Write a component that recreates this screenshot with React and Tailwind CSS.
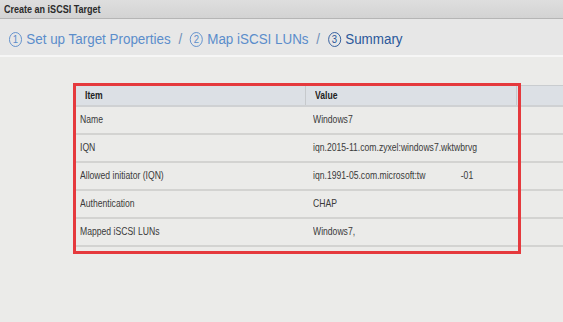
import React from "react";

const rows = [
  ["Name", "Windows7"],
  ["IQN", "iqn.2015-11.com.zyxel:windows7.wktwbrvg"],
  ["Allowed initiator (IQN)", "iqn.1991-05.com.microsoft:tw"],
  ["Authentication", "CHAP"],
  ["Mapped iSCSI LUNs", "Windows7,"],
];

function Circ({ n }) {
  return (
    <span className="inline-flex w-[15px] h-[15px] rounded-full border border-current items-center justify-center text-[11px] leading-none">
      {n}
    </span>
  );
}

function Sq({ children, cls = "" }) {
  return <span className={"inline-block whitespace-nowrap origin-left scale-x-[0.82] " + cls}>{children}</span>;
}

export default function App() {
  return (
    <div className="relative w-[563px] h-[322px] overflow-hidden bg-[#ebebe9] font-['Liberation_Sans',Arial,sans-serif] text-[#333]">
      <div className="h-[19px] bg-gradient-to-b from-[#dedede] to-[#d3d3d3] border-b border-[#b5b5b5] flex items-center pl-[4px]">
        <Sq cls="text-[11px] font-bold text-[#2b2b2b]">Create an iSCSI Target</Sq>
      </div>
      <div className="h-[38px] bg-[#e7e7e7] border-b-2 border-[#f6f6f6] pt-[4px] pl-[9px] flex items-center">
        <div className="flex items-center origin-left scale-x-[0.865] whitespace-nowrap text-[15.5px] text-[#5b8dcb]">
          <Circ n="1" />
          <span className="ml-[5px]">Set up Target Properties</span>
          <span className="ml-[9px] mr-[9px] text-[#6f8fb8]">/</span>
          <Circ n="2" />
          <span className="ml-[5px]">Map iSCSI LUNs</span>
          <span className="ml-[9px] mr-[9px] text-[#6f8fb8]">/</span>
          <span className="text-[#2a579a] flex items-center">
            <Circ n="3" />
            <span className="ml-[5px]">Summary</span>
          </span>
        </div>
      </div>
      <div className="mt-[28px] ml-[76px]">
        <div className="grid grid-cols-[230px_211px_1fr] h-[22px] bg-[#dce0e5] border-t border-[#c9cccf] border-b-2 border-b-[#cfd1d3] text-[10.5px] font-bold text-[#222]">
          <div className="pl-[9px] flex items-center border-r border-[#c6c9cc]"><Sq>Item</Sq></div>
          <div className="pl-[9px] flex items-center border-r border-[#c6c9cc]"><Sq>Value</Sq></div>
          <div></div>
        </div>
        {rows.map(([k, v], i) => (
          <div
            key={k}
            className="grid grid-cols-[230px_1fr] h-[28px] border-b-2 border-[#d3d3d1] text-[10.5px] text-[#3a3a3a]"
          >
            <div className="pl-[4px] flex items-center"><Sq>{k}</Sq></div>
            <div className="pl-[7px] flex items-center">
              <Sq>
                {v}
                {i === 2 && <span className="ml-[43px]">-01</span>}
              </Sq>
            </div>
          </div>
        ))}
      </div>
      <div className="absolute left-[73px] top-[83px] w-[448px] h-[171px] border-[3px] border-[#e5393d] pointer-events-none"></div>
    </div>
  );
}
